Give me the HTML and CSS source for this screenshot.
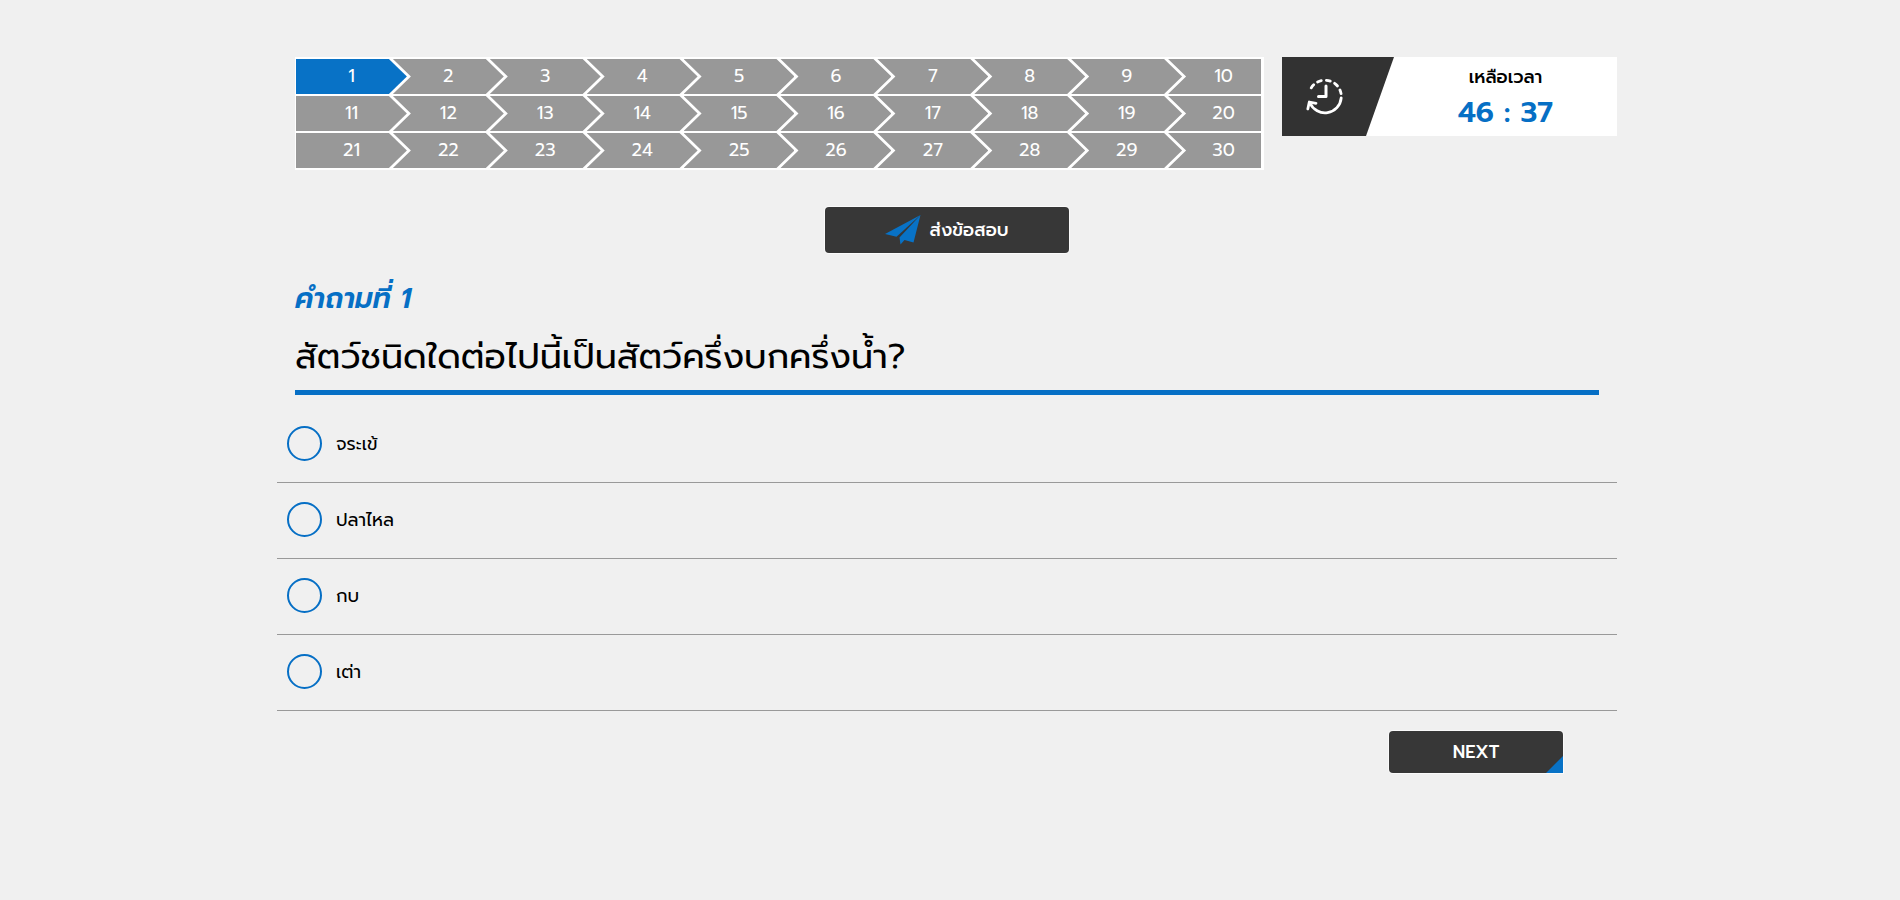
FILE: index.html
```html
<!DOCTYPE html>
<html lang="th">
<head>
<meta charset="utf-8">
<meta name="viewport" content="width=device-width, initial-scale=1">
<title>คำถามที่ 1</title>
<link rel="stylesheet" href="styles.css">
</head>
<body>
<main class="quiz">
  <div class="top">
    <nav class="steps">
      <button class="step current" type="button">1</button><button class="step" type="button">2</button><button class="step" type="button">3</button><button class="step" type="button">4</button><button class="step" type="button">5</button><button class="step" type="button">6</button><button class="step" type="button">7</button><button class="step" type="button">8</button><button class="step" type="button">9</button><button class="step" type="button">10</button>
      <button class="step" type="button">11</button><button class="step" type="button">12</button><button class="step" type="button">13</button><button class="step" type="button">14</button><button class="step" type="button">15</button><button class="step" type="button">16</button><button class="step" type="button">17</button><button class="step" type="button">18</button><button class="step" type="button">19</button><button class="step" type="button">20</button>
      <button class="step" type="button">21</button><button class="step" type="button">22</button><button class="step" type="button">23</button><button class="step" type="button">24</button><button class="step" type="button">25</button><button class="step" type="button">26</button><button class="step" type="button">27</button><button class="step" type="button">28</button><button class="step" type="button">29</button><button class="step" type="button">30</button>
    </nav>
    <aside class="timer">
      <div class="timer-icon">
        <svg width="40" height="40" viewBox="0 0 40 40" fill="none" stroke="#fff" stroke-width="2.8" stroke-linecap="round" stroke-linejoin="round" aria-hidden="true">
          <path d="M4 26A16.3 16.3 0 0 0 35.200 20.900"/>
          <path d="M1.800 32L3.300 25L10 26.300"/>
          <path d="M5.200 10.900A16.3 16.3 0 0 1 7.700 7.800M11.600 5A16.3 16.3 0 0 1 15.300 3.600M20.400 3.300A16.3 16.3 0 0 1 24.300 4.100M28.600 6.300A16.3 16.3 0 0 1 31.500 9M33.900 12.900A16.3 16.3 0 0 1 35.100 16.700"/>
          <path d="M20 9V19.500H12.500" stroke-width="3"/>
        </svg>
      </div>
      <div class="timer-text">
        <span class="timer-label">เหลือเวลา</span>
        <span class="timer-value">46 : 37</span>
      </div>
    </aside>
  </div>
  <button class="send" type="button">
    <svg width="36" height="30" viewBox="0 0 36 30" fill="#0872c6" aria-hidden="true">
      <path d="M35.500 0L0 19L11.500 21.800Z"/>
      <path d="M35.500 0L14.500 22.500L15.500 29.500L19.500 25L28.500 27.500Z"/>
    </svg>
    <span>ส่งข้อสอบ</span>
  </button>
  <form class="question">
    <h2 class="number">คำถามที่ 1</h2>
    <h1 class="title">สัตว์ชนิดใดต่อไปนี้เป็นสัตว์ครึ่งบกครึ่งน้ำ?</h1>
    <div class="options">
      <label class="option"><input type="radio" name="answer"><span>จระเข้</span></label>
      <label class="option"><input type="radio" name="answer"><span>ปลาไหล</span></label>
      <label class="option"><input type="radio" name="answer"><span>กบ</span></label>
      <label class="option"><input type="radio" name="answer"><span>เต่า</span></label>
    </div>
    <button class="next" type="button">NEXT</button>
  </form>
</main>
</body>
</html>
```
FILE: styles.css
```css
* { box-sizing: border-box; }
body {
  margin: 0;
  padding: 57px 6px 40px 0;
  background: #f0f0f0;
  color: #000;
  font-family: Prompt, "Noto Sans", "Noto Sans Thai", sans-serif;
}
button { border: 0; font-family: inherit; cursor: pointer; }
.quiz {
  display: flex;
  flex-direction: column;
  max-width: 1340px;
  margin: 0 auto;
}
.top {
  display: flex;
  align-items: flex-start;
  gap: 18px;
  padding-left: 18px;
}
.steps {
  flex: 1;
  display: grid;
  grid-template-columns: repeat(9, 97fr) 93fr;
  row-gap: 2px;
  padding: 2px 3px 2px 1px;
  background: #fff;
}
.step {
  height: 35px;
  margin-right: -14px;
  padding: 0 0 2px;
  background: #989898;
  color: #fff;
  font-size: 18px;
  clip-path: polygon(0 0, calc(100% - 18px) 0, 100% 50%, calc(100% - 18px) 100%, 0 100%, 18px 50%);
}
.step:nth-child(10n + 1) {
  clip-path: polygon(0 0, calc(100% - 18px) 0, 100% 50%, calc(100% - 18px) 100%, 0 100%);
}
.step:nth-child(10n) {
  margin-right: 0;
  padding-left: 18px;
  clip-path: polygon(0 0, 100% 0, 100% 100%, 0 100%, 18px 50%);
}
.step.current { background: #0872c6; }
.timer {
  display: flex;
  width: 335px;
  height: 79px;
  background: #fff;
}
.timer-icon {
  display: flex;
  align-items: center;
  width: 112px;
  padding-left: 24px;
  background: #323232;
  clip-path: polygon(0 0, 100% 0, 84px 100%, 0 100%);
}
.timer-text {
  flex: 1;
  display: flex;
  flex-direction: column;
  align-items: center;
  padding-top: 8px;
}
.timer-label { font-size: 18px; font-weight: 500; line-height: 24px; }
.timer-value { color: #066fc5; font-size: 29px; font-weight: 600; line-height: 46px; }
.send, .next {
  background: #373737;
  color: #fff;
  border-radius: 4px;
  box-shadow: 0 0 0 1px #fafafa;
  font-size: 18px;
  font-weight: 500;
}
.send {
  align-self: center;
  display: flex;
  align-items: center;
  justify-content: center;
  gap: 8px;
  width: 244px;
  height: 46px;
  margin-top: 37px;
  padding-bottom: 2px;
}
.question { display: flex; flex-direction: column; }
.number {
  margin: 22px 18px 0;
  color: #066fc5;
  font-size: 28px;
  font-style: italic;
  font-weight: 600;
  line-height: 48px;
}
.title {
  margin: 6px 18px 0;
  padding-bottom: 5px;
  border-bottom: 5px solid #066fc5;
  font-size: 35px;
  font-weight: 400;
  line-height: 56px;
}
.options { padding-top: 12px; }
.option {
  display: flex;
  align-items: center;
  gap: 14px;
  height: 76px;
  padding: 0 0 2px 10px;
  border-bottom: 1px solid #999;
  font-size: 18px;
}
.option input {
  appearance: none;
  width: 35px;
  height: 35px;
  margin: 0;
  border: 2px solid #066fc5;
  border-radius: 50%;
}
.option input:checked { background: #066fc5; box-shadow: inset 0 0 0 6px #f0f0f0; }
.next {
  position: relative;
  align-self: flex-end;
  width: 174px;
  height: 42px;
  margin: 20px 54px 0 0;
  padding-bottom: 2px;
  border-bottom-right-radius: 0;
}
.next::after {
  content: "";
  position: absolute;
  right: 0;
  bottom: 0;
  width: 17px;
  height: 17px;
  background: #0872c6;
  clip-path: polygon(100% 0, 100% 100%, 0 100%);
}
```
